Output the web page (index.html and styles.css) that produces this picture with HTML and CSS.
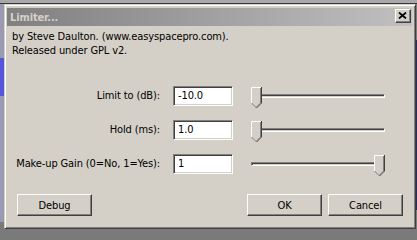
FILE: index.html
```html
<!DOCTYPE html>
<html>
<head>
<meta charset="utf-8">
<title>Limiter...</title>
<link rel="stylesheet" href="styles.css">
</head>
<body>
<div class="window">
  <div class="titlebar">
    <span class="title">Limiter...</span>
    <div class="close">
      <svg width="9" height="7" viewBox="0 0 9 7"><path d="M1 0.5L8 6.5M8 0.5L1 6.5" stroke="#000" stroke-width="1.7" fill="none"/></svg>
    </div>
  </div>
  <div class="content">
    <p class="credits">by Steve Daulton. (www.easyspacepro.com).<br>Released under GPL v2.</p>
    <div class="form">
      <label class="label">Limit to (dB):</label>
      <div class="field">-10.0</div>
      <div class="slider">
        <div class="track"></div>
        <svg class="thumb" style="left:0px" width="11" height="21" viewBox="0 0 11 21"><path d="M0 0H11V16L5.5 21.5 0 16Z" fill="#d4d0c8"/><path d="M0.5 16V0.5H10" stroke="#fff" fill="none"/><path d="M10.5 0V16L5.5 21" stroke="#404040" fill="none"/><path d="M9.5 1V16L5.5 20" stroke="#808080" fill="none"/><path d="M0.5 16L5.5 21" stroke="#808080" fill="none"/></svg>
      </div>
      <label class="label">Hold (ms):</label>
      <div class="field">1.0</div>
      <div class="slider">
        <div class="track"></div>
        <svg class="thumb" style="left:0px" width="11" height="21" viewBox="0 0 11 21"><path d="M0 0H11V16L5.5 21.5 0 16Z" fill="#d4d0c8"/><path d="M0.5 16V0.5H10" stroke="#fff" fill="none"/><path d="M10.5 0V16L5.5 21" stroke="#404040" fill="none"/><path d="M9.5 1V16L5.5 20" stroke="#808080" fill="none"/><path d="M0.5 16L5.5 21" stroke="#808080" fill="none"/></svg>
      </div>
      <label class="label">Make-up Gain (0=No, 1=Yes):</label>
      <div class="field">1</div>
      <div class="slider">
        <div class="track"></div>
        <svg class="thumb" style="left:123px" width="11" height="21" viewBox="0 0 11 21"><path d="M0 0H11V16L5.5 21.5 0 16Z" fill="#d4d0c8"/><path d="M0.5 16V0.5H10" stroke="#fff" fill="none"/><path d="M10.5 0V16L5.5 21" stroke="#404040" fill="none"/><path d="M9.5 1V16L5.5 20" stroke="#808080" fill="none"/><path d="M0.5 16L5.5 21" stroke="#808080" fill="none"/></svg>
      </div>
    </div>
    <div class="buttons">
      <button class="btn">Debug</button>
      <span class="spacer"></span>
      <button class="btn">OK</button>
      <button class="btn">Cancel</button>
    </div>
  </div>
</div>
</body>
</html>
```

FILE: styles.css
```css
html, body {
  margin: 0;
}

body {
  width: 417px;
  height: 234px;
  overflow: hidden;
  box-sizing: border-box;
  padding: 4px 0 0 4px;
  font: 11px "DejaVu Sans Condensed", "Liberation Sans", sans-serif;
  letter-spacing: -0.12px;
  color: #000;
  background:
    linear-gradient(#a8a8a8 0 3px, #3a3a3a 3px 4px) 0 0 / 100% 4px no-repeat,
    linear-gradient(#9a9ab2 0 58px, #5656dc 58px 96px, #9a9ab2 96px 222px, #7a7a7a 222px) 0 0 / 4px 100% no-repeat,
    linear-gradient(#2c2c5a, #2c2c5a) right 0 top 40px / 1px 170px no-repeat,
    #7a7a7a;
}

.window {
  width: 412px;
  height: 225px;
  box-sizing: border-box;
  border: 1px solid;
  border-color: #d4d0c8 #404040 #404040 #d4d0c8;
  box-shadow: inset 1px 1px #fff, inset -1px -1px #808080;
  padding: 3px 3px 3px 2px;
  background: #d4d0c8;
  display: flex;
  flex-direction: column;
}

.titlebar {
  height: 18px;
  flex: none;
  display: flex;
  align-items: center;
  padding: 0 1px 0 3px;
  background: linear-gradient(to right, #808080, #c0c0c0);
}

.title {
  flex: 1;
  font-weight: bold;
  color: #d4d0c8;
}

.close {
  width: 16px;
  height: 14px;
  box-sizing: border-box;
  align-self: flex-start;
  margin-top: 1px;
  border: 1px solid;
  border-color: #fff #404040 #404040 #fff;
  box-shadow: inset -1px -1px #808080;
  background: #d4d0c8;
  display: flex;
  align-items: center;
  justify-content: center;
}

.close svg {
  display: block;
  margin: 0 1px 1px 0;
}

.content {
  flex: 1;
  padding: 4px 0 0 5px;
}

.credits {
  margin: 0;
  line-height: 14px;
  white-space: nowrap;
}

.form {
  display: grid;
  grid-template-columns: 148px 60px 139px;
  grid-auto-rows: 20px;
  column-gap: 13px;
  row-gap: 14px;
  margin-top: 28px;
}

.label {
  justify-self: end;
  align-self: center;
  white-space: nowrap;
  line-height: 14px;
}

.field {
  box-sizing: border-box;
  height: 20px;
  border: 1px solid;
  border-color: #808080 #fff #fff #808080;
  box-shadow: inset 1px 1px #404040, inset -1px -1px #d4d0c8;
  background: #fff;
  padding: 0 4px;
  line-height: 18px;
}

.slider {
  position: relative;
  margin-left: 5px;
  height: 20px;
}

.track {
  margin-top: 8px;
  height: 4px;
  box-sizing: border-box;
  border: 1px solid;
  border-color: #808080 #fff #fff #808080;
  box-shadow: inset 1px 1px #404040;
  background: #d4d0c8;
}

.thumb {
  position: absolute;
  top: 1px;
  display: block;
}

.buttons {
  display: flex;
  gap: 6px;
  margin: 20px 9px 0 5px;
}

.spacer {
  flex: 1;
}

.btn {
  width: 75px;
  height: 22px;
  box-sizing: border-box;
  border: 1px solid;
  border-color: #fff #404040 #404040 #fff;
  box-shadow: inset -1px -1px #808080;
  background: #d4d0c8;
  font: inherit;
  letter-spacing: inherit;
  color: #000;
  padding: 0;
  margin: 0;
}
```
